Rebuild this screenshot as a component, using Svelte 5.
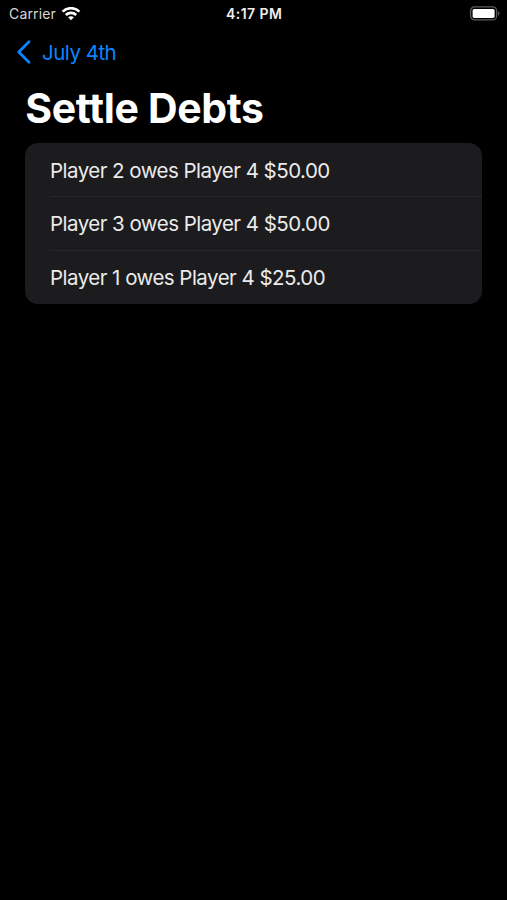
<script>
  const debts = [
    { from: 'Player 2', to: 'Player 4', amount: '$50.00' },
    { from: 'Player 3', to: 'Player 4', amount: '$50.00' },
    { from: 'Player 1', to: 'Player 4', amount: '$25.00' }
  ];
</script>

<div class="screen">
  <header class="status">
    <div class="carrier">
      <span>Carrier</span>
      <svg width="20" height="14" viewBox="0 0 20 14" fill="none" stroke="#fff" stroke-width="2.7">
        <path d="M1.6 4.6C6.2 .1 13.8 .1 18.4 4.6" />
        <path d="M4.8 7.9C7.8 5.1 12.2 5.1 15.2 7.9" />
        <path d="M10 13.2L7.1 10.3C8.8 8.8 11.2 8.8 12.9 10.3Z" fill="#fff" stroke="none" />
      </svg>
    </div>
    <time>4:17 PM</time>
    <svg class="battery" width="32" height="16" viewBox="0 0 32 16">
      <rect x="1.6" y="0.9" width="26" height="13" rx="4" fill="none" stroke="#5c5c5c" stroke-width="1.3" />
      <rect x="3.6" y="2.9" width="22" height="9" rx="1.6" fill="#fff" />
      <path d="M29 5.1C31 6 31 8.8 29 9.7Z" fill="#5c5c5c" />
    </svg>
  </header>

  <nav>
    <svg width="15" height="26" viewBox="0 0 15 26" fill="none" stroke="#0a84ff" stroke-width="2.8" stroke-linecap="round" stroke-linejoin="round">
      <path d="M12 2.8L1.8 13L12 23.2" />
    </svg>
    <span>July 4th</span>
  </nav>

  <h1>Settle Debts</h1>

  <ul>
    {#each debts as debt}
      <li><span>{debt.from} owes {debt.to} {debt.amount}</span></li>
    {/each}
  </ul>
</div>

<style>
  :global(body) {
    margin: 0;
    background: #000;
  }
  .screen {
    box-sizing: border-box;
    width: 100%;
    height: 900px;
    overflow: hidden;
    background: #000;
    color: #fff;
    font-family: Inter, 'Liberation Sans', sans-serif;
  }
  .status {
    display: grid;
    grid-template-columns: 1fr auto 1fr;
    align-items: center;
    height: 28px;
    padding: 0 6px 0 9px;
    font-size: 14px;
    line-height: 20px;
  }
  .carrier {
    display: flex;
    align-items: center;
    gap: 5px;
    color: #d8d8d8;
    letter-spacing: 0.15px;
  }
  time {
    margin-right: 1.5px;
    font-weight: 600;
    color: #efefef;
    letter-spacing: 0.45px;
  }
  .battery {
    justify-self: end;
  }
  nav {
    display: flex;
    align-items: center;
    gap: 10px;
    height: 48px;
    padding-left: 17px;
    color: #0a84ff;
    font-size: 20.5px;
    letter-spacing: -0.5px;
  }
  h1 {
    margin: 7px 0 0 25.3px;
    font-size: 41px;
    line-height: 50px;
    font-weight: 700;
    letter-spacing: -0.37px;
  }
  ul {
    width: 457px;
    margin: 10px 0 0 25.4px;
    padding: 0;
    list-style: none;
    border-radius: 13px;
    overflow: hidden;
    background: #1c1c1e;
    font-size: 20.5px;
    letter-spacing: -0.53px;
    color: #ebebeb;
  }
  li {
    box-sizing: border-box;
    height: 53.6px;
    padding-left: 24.6px;
  }
  li:first-child {
    height: 54px;
  }
  li span {
    display: flex;
    align-items: center;
    box-sizing: border-box;
    height: 100%;
    padding-top: 1px;
    white-space: pre;
  }
  li:not(:last-child) span {
    border-bottom: 1px solid #272729;
  }
</style>
